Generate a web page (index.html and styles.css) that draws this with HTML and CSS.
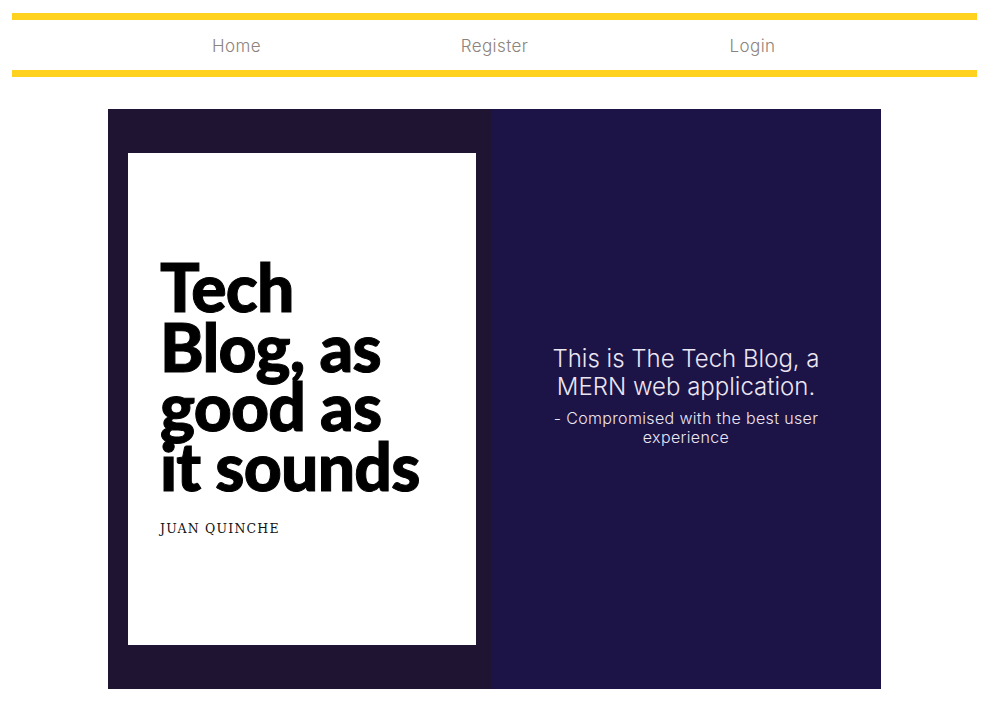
FILE: index.html
```html
<!DOCTYPE html>
<html lang="en">
<head>
<meta charset="utf-8">
<title>The Tech Blog</title>
<link rel="stylesheet" href="styles.css">
</head>
<body>
<header class="site-header">
  <nav class="nav">
    <a class="nav-link" href="#">Home</a>
    <a class="nav-link" href="#">Register</a>
    <a class="nav-link" href="#">Login</a>
  </nav>
</header>
<main class="hero">
  <section class="hero-cover">
    <div class="cover-card">
      <h1 class="cover-title"><span class="cover-line">Tech</span><span class="cover-line">Blog, as</span><span class="cover-line">good as</span><span class="cover-line">it sounds</span></h1>
      <p class="cover-author">JUAN QUINCHE</p>
    </div>
  </section>
  <section class="hero-info">
    <div class="info-text">
      <h2 class="info-title">This is The Tech Blog, a MERN web application.</h2>
      <p class="info-sub">- Compromised with the best user experience</p>
    </div>
  </section>
</main>
</body>
</html>
```
FILE: styles.css
```css
html, body {
  margin: 0;
  padding: 0;
  background: #ffffff;
}
body {
  padding: 13px 13px 0 12px;
  font-family: "Inter", "Noto Sans", sans-serif;
}
.site-header {
  border-top: 7px solid #ffd21f;
  border-bottom: 7px solid #ffd21f;
  height: 50px;
  display: flex;
  justify-content: center;
}
.nav {
  width: 774px;
  display: flex;
  justify-content: space-around;
  align-items: center;
}
.nav-link {
  flex: 1;
  text-align: center;
  color: #8c837c;
  text-decoration: none;
  font-size: 17px;
  font-weight: 300;
  letter-spacing: 0.4px;
  padding-top: 2px;
}
.hero {
  width: 773px;
  height: 580px;
  margin: 32px auto 0;
  display: flex;
}
.hero-cover {
  width: 383px;
  box-sizing: border-box;
  background: #1f1432;
  padding: 44px 15px 44px 20px;
}
.cover-card {
  background: #ffffff;
  height: 100%;
  box-sizing: border-box;
  padding: 104px 0 0 32px;
}
.cover-title {
  margin: 0;
  font-family: "Lato", sans-serif;
  font-weight: 900;
  font-size: 66px;
  letter-spacing: -0.012em;
  -webkit-text-stroke: 1px #000;
  color: #000;
}
.cover-line {
  display: block;
  height: 59.5px;
  line-height: 59.5px;
}
.cover-author {
  margin: 26px 0 0;
  font-family: "DejaVu Serif", serif;
  font-size: 12.5px;
  letter-spacing: 1.2px;
  color: #111;
}
.hero-info {
  flex: 1;
  background: #1c1346;
  display: flex;
  align-items: center;
  justify-content: center;
}
.info-text {
  width: 290px;
  text-align: center;
  color: #ece6f2;
  margin-top: -6px;
}
.info-title {
  margin: 0;
  font-weight: 300;
  font-size: 24px;
  line-height: 28px;
}
.info-sub {
  margin: 8px 0 0;
  font-weight: 300;
  font-size: 16px;
  line-height: 19px;
  letter-spacing: 0.35px;
}
```
